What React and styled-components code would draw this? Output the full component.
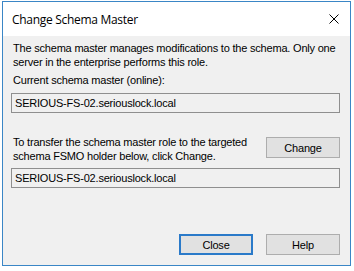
import React from 'react';
import styled, { createGlobalStyle } from 'styled-components';

const GlobalStyle = createGlobalStyle`
  html, body {
    margin: 0;
    padding: 0;
    background: #ffffff;
  }
  body {
    font-family: "Liberation Sans", Arial, sans-serif;
    font-size: 11px;
    letter-spacing: -0.2px;
    color: #000;
  }
`;

export const Window = styled.div`
  margin: 1px 0 0 2px;
  width: 349px;
  height: 265px;
  box-sizing: border-box;
  border: 1px solid #3a86c6;
  display: flex;
  flex-direction: column;
  background: #f0f0f0;
`;

export const TitleBar = styled.div`
  height: 34px;
  flex: none;
  background: #ffffff;
  display: flex;
  align-items: center;
  justify-content: space-between;
  padding: 0 10px 0 9px;
`;

export const Title = styled.span`
  font-family: "Open Sans", "Noto Sans", sans-serif;
  font-size: 12px;
  letter-spacing: -0.3px;
  color: #000;
`;

const CloseGlyph = styled.svg`
  width: 10px;
  height: 10px;
  margin-right: 1px;
`;

export const Body = styled.div`
  flex: 1;
  display: flex;
  flex-direction: column;
  padding: 5px 10px 10px 8px;
`;

export const Label = styled.div`
  line-height: 14px;
  padding-left: 2px;
  white-space: nowrap;
  margin-top: ${p => p.$gap || 0}px;
`;

export const Field = styled.div`
  height: 20px;
  box-sizing: border-box;
  border: 1px solid #8f8f8f;
  background: #f0f0f0;
  padding: 0 3px;
  display: flex;
  align-items: center;
  white-space: nowrap;
  margin-top: ${p => p.$gap || 0}px;
`;

export const Row = styled.div`
  display: flex;
  align-items: flex-start;
  justify-content: space-between;
  margin-top: ${p => p.$gap || 0}px;
`;

export const Button = styled.button`
  width: 74px;
  height: 21px;
  box-sizing: border-box;
  background: #e1e1e1;
  border: ${p => (p.$default ? '2px solid #2a7ac9' : '1px solid #adadad')};
  font-family: "Liberation Sans", Arial, sans-serif;
  font-size: 11px;
  letter-spacing: -0.2px;
  color: #000;
  padding: 0;
  margin-top: ${p => p.$gap || 0}px;
`;

export const ButtonBar = styled.div`
  margin-top: auto;
  display: flex;
  justify-content: flex-end;
  gap: 13px;
`;

const App = () => (
  <>
    <GlobalStyle />
    <Window>
      <TitleBar>
        <Title>Change Schema Master</Title>
        <CloseGlyph viewBox="0 0 10 10">
          <path d="M0.5 0.5 L9.5 9.5 M9.5 0.5 L0.5 9.5" stroke="#000" strokeWidth="1" fill="none" />
        </CloseGlyph>
      </TitleBar>
      <Body>
        <Label>
          The schema master manages modifications to the schema. Only one
          <br />
          server in the enterprise performs this role.
        </Label>
        <Label $gap={4}>Current schema master (online):</Label>
        <Field $gap={6}>SERIOUS-FS-02.seriouslock.local</Field>
        <Row $gap={22}>
          <Label>
            To transfer the schema master role to the targeted
            <br />
            schema FSMO holder below, click Change.
          </Label>
          <Button $gap={2}>Change</Button>
        </Row>
        <Field $gap={5}>SERIOUS-FS-02.seriouslock.local</Field>
        <ButtonBar>
          <Button $default>Close</Button>
          <Button>Help</Button>
        </ButtonBar>
      </Body>
    </Window>
  </>
);

export default App;
